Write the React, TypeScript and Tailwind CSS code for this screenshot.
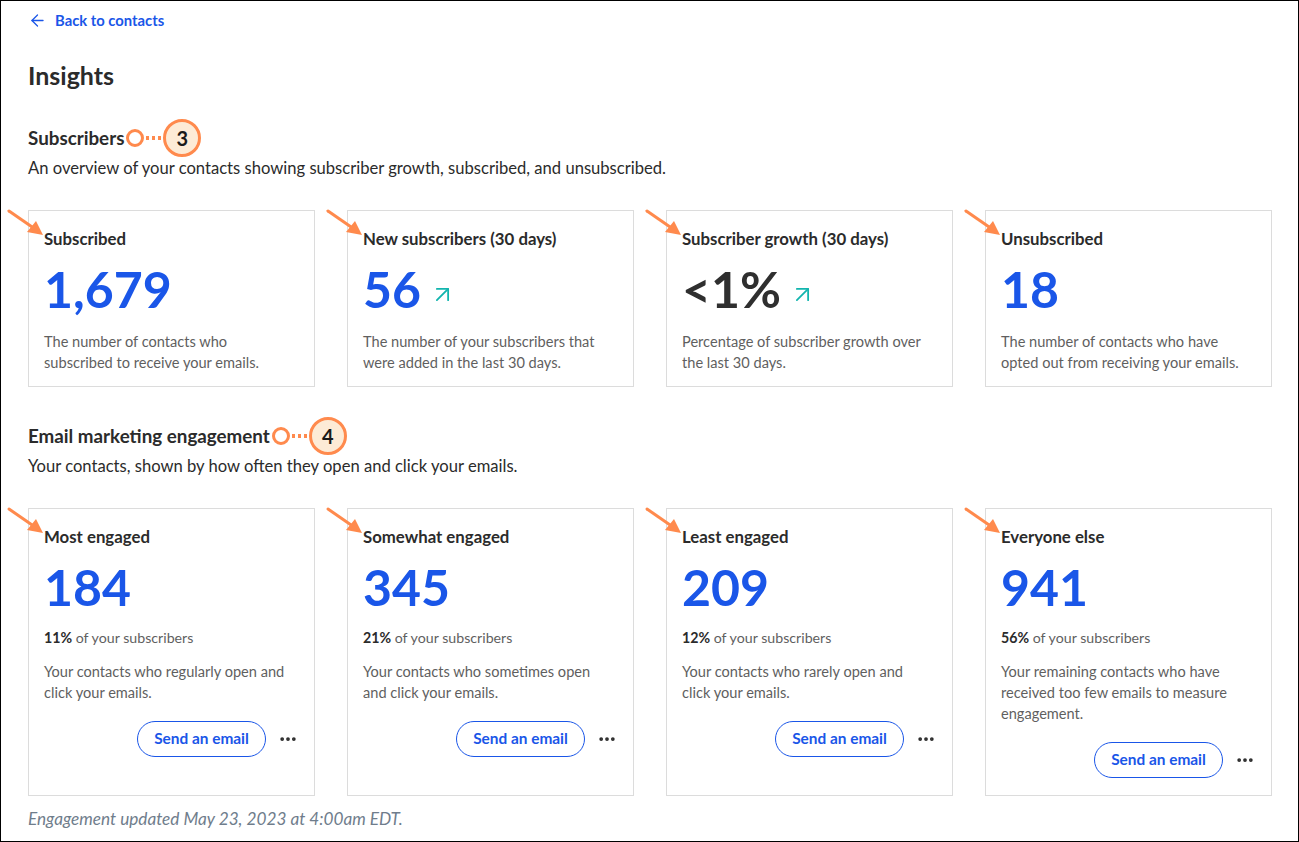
import { ArrowLeft, ArrowUpRight, MoreHorizontal } from 'lucide-react'

type StatCard = {
  title: string
  value: string
  dark?: boolean
  trend?: boolean
  desc: string
}

type EngageCard = {
  title: string
  value: string
  pct: string
  desc: string
}

const STATS: StatCard[] = [
  { title: 'Subscribed', value: '1,679', desc: 'The number of contacts who subscribed to receive your emails.' },
  { title: 'New subscribers (30 days)', value: '56', trend: true, desc: 'The number of your subscribers that were added in the last 30 days.' },
  { title: 'Subscriber growth (30 days)', value: '<1%', dark: true, trend: true, desc: 'Percentage of subscriber growth over the last 30 days.' },
  { title: 'Unsubscribed', value: '18', desc: 'The number of contacts who have opted out from receiving your emails.' },
]

const ENGAGE: EngageCard[] = [
  { title: 'Most engaged', value: '184', pct: '11%', desc: 'Your contacts who regularly open and click your emails.' },
  { title: 'Somewhat engaged', value: '345', pct: '21%', desc: 'Your contacts who sometimes open and click your emails.' },
  { title: 'Least engaged', value: '209', pct: '12%', desc: 'Your contacts who rarely open and click your emails.' },
  { title: 'Everyone else', value: '941', pct: '56%', desc: 'Your remaining contacts who have received too few emails to measure engagement.' },
]

// Orange annotation arrow pointing at a card title
function PointerArrow() {
  return (
    <svg className="absolute -left-[24px] -top-[4px] pointer-events-none" width="44" height="44" viewBox="0 0 44 44">
      <line x1="4" y1="4" x2="30" y2="22" stroke="#ff8a4d" strokeWidth="3" strokeLinecap="round" />
      <polygon points="38,28 22,25 31,14" fill="#ff8a4d" />
    </svg>
  )
}

// Numbered callout badge next to a section heading
function Callout({ n }: { n: number }) {
  return (
    <span className="inline-flex items-center ml-[2px]">
      <span className="w-[18px] h-[18px] rounded-full border-[3px] border-[#ff8a4d] bg-white" />
      <span className="flex gap-[3px] mx-[2px]">
        <span className="w-[3px] h-[4px] bg-[#ff8a4d]" />
        <span className="w-[3px] h-[4px] bg-[#ff8a4d]" />
        <span className="w-[3px] h-[4px] bg-[#ff8a4d]" />
      </span>
      <span className="w-[38px] h-[38px] rounded-full border-[3px] border-[#ff8a4d] bg-[#fdebd6] flex items-center justify-center text-[20px] font-bold text-[#1a1a1a]">
        {n}
      </span>
    </span>
  )
}

export default function App() {
  return (
    <div className="w-[1299px] h-[842px] border border-black bg-white overflow-hidden text-[#2b2b2b]"
      style={{ fontFamily: 'Lato, "Noto Sans", sans-serif' }}>
      <div className="pl-[27px] pr-[26px]">
        <a className="flex items-center gap-[8px] pt-[9px] h-[20px] box-content text-[14.8px] font-bold text-[#1a56e8]">
          <ArrowLeft size={19} strokeWidth={1.6} />
          Back to contacts
        </a>

        <h1 className="mt-[30px] text-[25px] font-bold leading-[30px]">Insights</h1>

        {/* Subscribers */}
        <h2 className="mt-[29px] flex items-center text-[18.8px] font-bold h-[38px]">
          Subscribers
          <Callout n={3} />
        </h2>
        <p className="text-[16.6px] leading-[22px]">
          An overview of your contacts showing subscriber growth, subscribed, and unsubscribed.
        </p>

        <div className="mt-[31px] grid grid-cols-4 gap-[32px] w-[1244px]">
          {STATS.map(s => (
            <div key={s.title} className="relative border border-[#dcdcdc] h-[177px] px-[15px] pt-[18px]">
              <PointerArrow />
              <p className="text-[16.8px] font-bold leading-[20px]">{s.title}</p>
              <div className="mt-[12px] flex items-center h-[56px]">
                <span className={`text-[50px] font-bold leading-none ${s.dark ? 'text-[#2f2f2f]' : 'text-[#1a56e8]'}`}>
                  {s.value}
                </span>
                {s.trend && <ArrowUpRight className="ml-[8px] mt-[10px] text-[#12b5ae]" size={27} strokeWidth={1.6} />}
              </div>
              <p className="mt-[14px] text-[14.6px] leading-[21px] text-[#5f5f5f] pr-[8px]">{s.desc}</p>
            </div>
          ))}
        </div>

        {/* Email marketing engagement */}
        <h2 className="mt-[30px] flex items-center text-[18.8px] font-bold h-[38px]">
          Email marketing engagement
          <Callout n={4} />
        </h2>
        <p className="text-[16.6px] leading-[22px]">
          Your contacts, shown by how often they open and click your emails.
        </p>

        <div className="mt-[31px] grid grid-cols-4 gap-[32px] w-[1244px]">
          {ENGAGE.map(e => (
            <div key={e.title} className="relative border border-[#dcdcdc] h-[288px] pl-[15px] pr-[16px] pt-[18px] flex flex-col">
              <PointerArrow />
              <p className="text-[16.8px] font-bold leading-[20px]">{e.title}</p>
              <div className="mt-[12px] flex items-center h-[56px]">
                <span className="text-[50px] font-bold leading-none text-[#1a56e8]">{e.value}</span>
              </div>
              <p className="mt-[13px] text-[14.2px] leading-[20px] text-[#5f5f5f]">
                <span className="font-bold text-[#2b2b2b]">{e.pct}</span> of your subscribers
              </p>
              <p className="mt-[13px] text-[14.6px] leading-[21px] text-[#5f5f5f] pr-[7px]">{e.desc}</p>
              <div className="mt-[18px] flex items-center justify-end gap-[12px]">
                <button className="h-[36px] w-[129px] rounded-full border border-[#1a56e8] text-[15.4px] font-bold text-[#1a56e8]">
                  Send an email
                </button>
                <MoreHorizontal size={20} strokeWidth={2.5} className="text-[#2b2b2b]" />
              </div>
            </div>
          ))}
        </div>

        <p className="mt-[12px] text-[17.2px] italic text-[#6f7d8c] leading-[22px]">
          Engagement updated May 23, 2023 at 4:00am EDT.
        </p>
      </div>
    </div>
  )
}
